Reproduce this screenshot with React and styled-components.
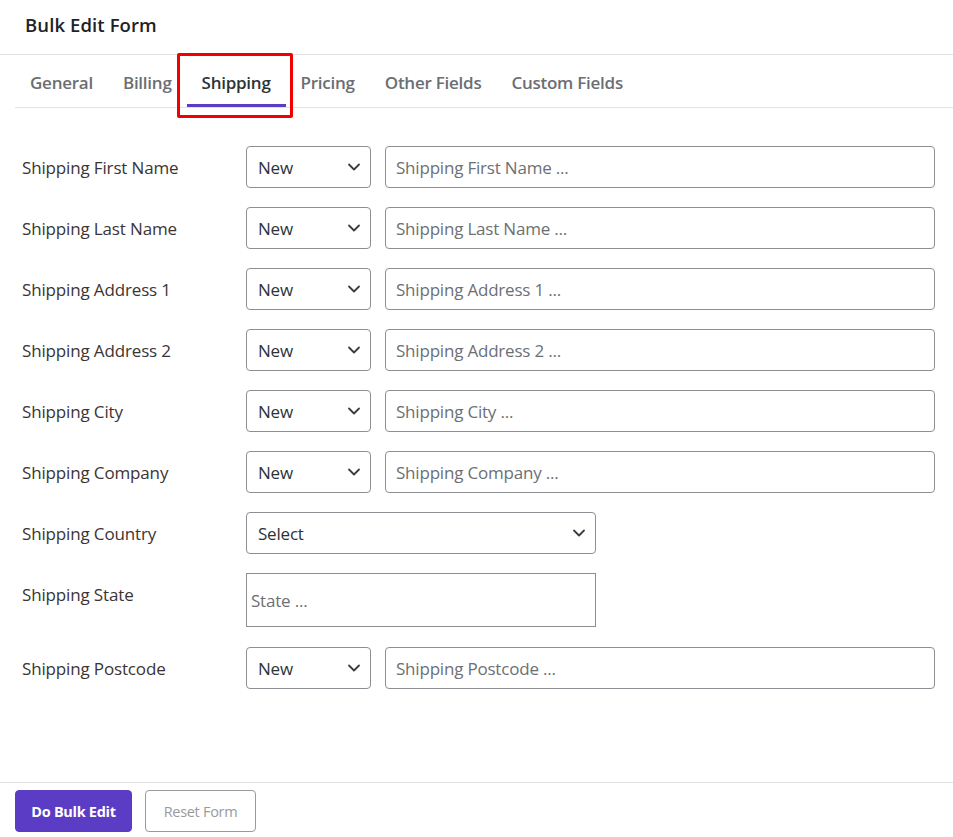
import React from "react";
import styled, { createGlobalStyle } from "styled-components";

const Global = createGlobalStyle`
  html, body { margin: 0; padding: 0; background: #fff; }
  body { font-family: "Open Sans", "Noto Sans", sans-serif; }
  * { box-sizing: border-box; }
`;

const Page = styled.div`
  width: 953px;
  height: 837px;
  display: flex;
  flex-direction: column;
  background: #fff;
  position: relative;
  overflow: hidden;
`;

const Header = styled.div`
  height: 55px;
  padding: 0 25px;
  display: flex;
  align-items: center;
  border-bottom: 1px solid #e2e2e2;
`;

const Title = styled.h1`
  margin: 0;
  font-size: 18.5px;
  font-weight: 600;
  color: #1d2327;
  letter-spacing: 0.1px;
  padding-bottom: 5px;
`;

const TabBar = styled.div`
  margin-left: 15px;
  height: 53px;
  display: flex;
  align-items: stretch;
  border-bottom: 1px solid #e2e2e2;
  position: relative;
`;

const Tab = styled.div`
  padding: 2px 15px 0;
  display: flex;
  align-items: center;
  font-size: 17px;
  font-weight: 600;
  letter-spacing: -0.25px;
  color: ${(p) => (p.$active ? "#2c3338" : "#6b6e72")};
  position: relative;
  &::after {
    content: "";
    display: ${(p) => (p.$active ? "block" : "none")};
    position: absolute;
    left: 0;
    right: 0;
    bottom: 0;
    height: 3px;
    background: #5b3cc4;
  }
`;

const Highlight = styled.div`
  position: absolute;
  left: 162px;
  top: -2px;
  width: 116px;
  height: 65px;
  border: 3px solid #f20000;
  border-radius: 2px;
  pointer-events: none;
`;

const Form = styled.div`
  flex: 1;
  padding: 38px 18px 0 22px;
  display: flex;
  flex-direction: column;
  gap: 19px;
`;

const Row = styled.div`
  display: flex;
  align-items: ${(p) => (p.$top ? "flex-start" : "center")};
  min-height: 42px;
  margin-bottom: ${(p) => (p.$top ? "1px" : "0")};
`;

const Label = styled.div`
  width: 224px;
  flex: none;
  font-size: 17px;
  color: #3c3434;
  letter-spacing: -0.15px;
  padding-top: ${(p) => (p.$top ? "10px" : "0")};
`;

const SelectBox = styled.div`
  width: ${(p) => p.$w}px;
  height: 42px;
  flex: none;
  border: 1px solid #8c8f94;
  border-radius: 4px;
  display: flex;
  align-items: center;
  justify-content: space-between;
  padding: 0 9px 0 11px;
  font-size: 17px;
  letter-spacing: -0.2px;
  color: #2c3338;
`;

const TextBox = styled.div`
  flex: ${(p) => (p.$w ? "none" : "1")};
  width: ${(p) => (p.$w ? `${p.$w}px` : "auto")};
  height: ${(p) => p.$h || 42}px;
  margin-left: ${(p) => p.$ml || 0}px;
  border: 1px solid #8c8f94;
  border-radius: ${(p) => (p.$square ? "0" : "4px")};
  display: flex;
  align-items: center;
  padding: 0 ${(p) => (p.$square ? "4px" : "10px")};
  font-size: 17px;
  letter-spacing: -0.2px;
  color: #6c7075;
`;

const Footer = styled.div`
  height: 55px;
  border-top: 1px solid #e2e2e2;
  padding: 7px 15px 0;
  display: flex;
  gap: 13px;
  align-items: flex-start;
`;

const Button = styled.div`
  height: 42px;
  width: ${(p) => (p.$primary ? "117px" : "111px")};
  border-radius: 4px;
  display: flex;
  align-items: center;
  justify-content: center;
  font-size: 14.5px;
  letter-spacing: -0.3px;
  font-weight: ${(p) => (p.$primary ? 700 : 400)};
  background: ${(p) => (p.$primary ? "#5b3cc4" : "#fff")};
  color: ${(p) => (p.$primary ? "#fff" : "#9a9a9a")};
  border: 1px solid ${(p) => (p.$primary ? "#5b3cc4" : "#9a9a9a")};
`;

const Chevron = () => (
  <svg width="14" height="14" viewBox="0 0 14 14" fill="none">
    <path d="M2 4.5l5 5 5-5" stroke="#3c3c3c" strokeWidth="1.8" strokeLinecap="round" strokeLinejoin="round" />
  </svg>
);

const tabs = ["General", "Billing", "Shipping", "Pricing", "Other Fields", "Custom Fields"];

const fields = [
  "Shipping First Name",
  "Shipping Last Name",
  "Shipping Address 1",
  "Shipping Address 2",
  "Shipping City",
  "Shipping Company",
];

export default function App() {
  return (
    <>
      <Global />
      <Page>
        <Header>
          <Title>Bulk Edit Form</Title>
        </Header>
        <TabBar>
          {tabs.map((t) => (
            <Tab key={t} $active={t === "Shipping"}>
              {t}
            </Tab>
          ))}
          <Highlight />
        </TabBar>
        <Form>
          {fields.map((f) => (
            <Row key={f}>
              <Label>{f}</Label>
              <SelectBox $w={125}>
                New <Chevron />
              </SelectBox>
              <TextBox $ml={14}>{f} ...</TextBox>
            </Row>
          ))}
          <Row>
            <Label>Shipping Country</Label>
            <SelectBox $w={350}>
              Select <Chevron />
            </SelectBox>
          </Row>
          <Row $top>
            <Label $top>Shipping State</Label>
            <TextBox $w={350} $h={54} $square>
              State ...
            </TextBox>
          </Row>
          <Row>
            <Label>Shipping Postcode</Label>
            <SelectBox $w={125}>
              New <Chevron />
            </SelectBox>
            <TextBox $ml={14}>Shipping Postcode ...</TextBox>
          </Row>
        </Form>
        <Footer>
          <Button $primary>Do Bulk Edit</Button>
          <Button>Reset Form</Button>
        </Footer>
      </Page>
    </>
  );
}
